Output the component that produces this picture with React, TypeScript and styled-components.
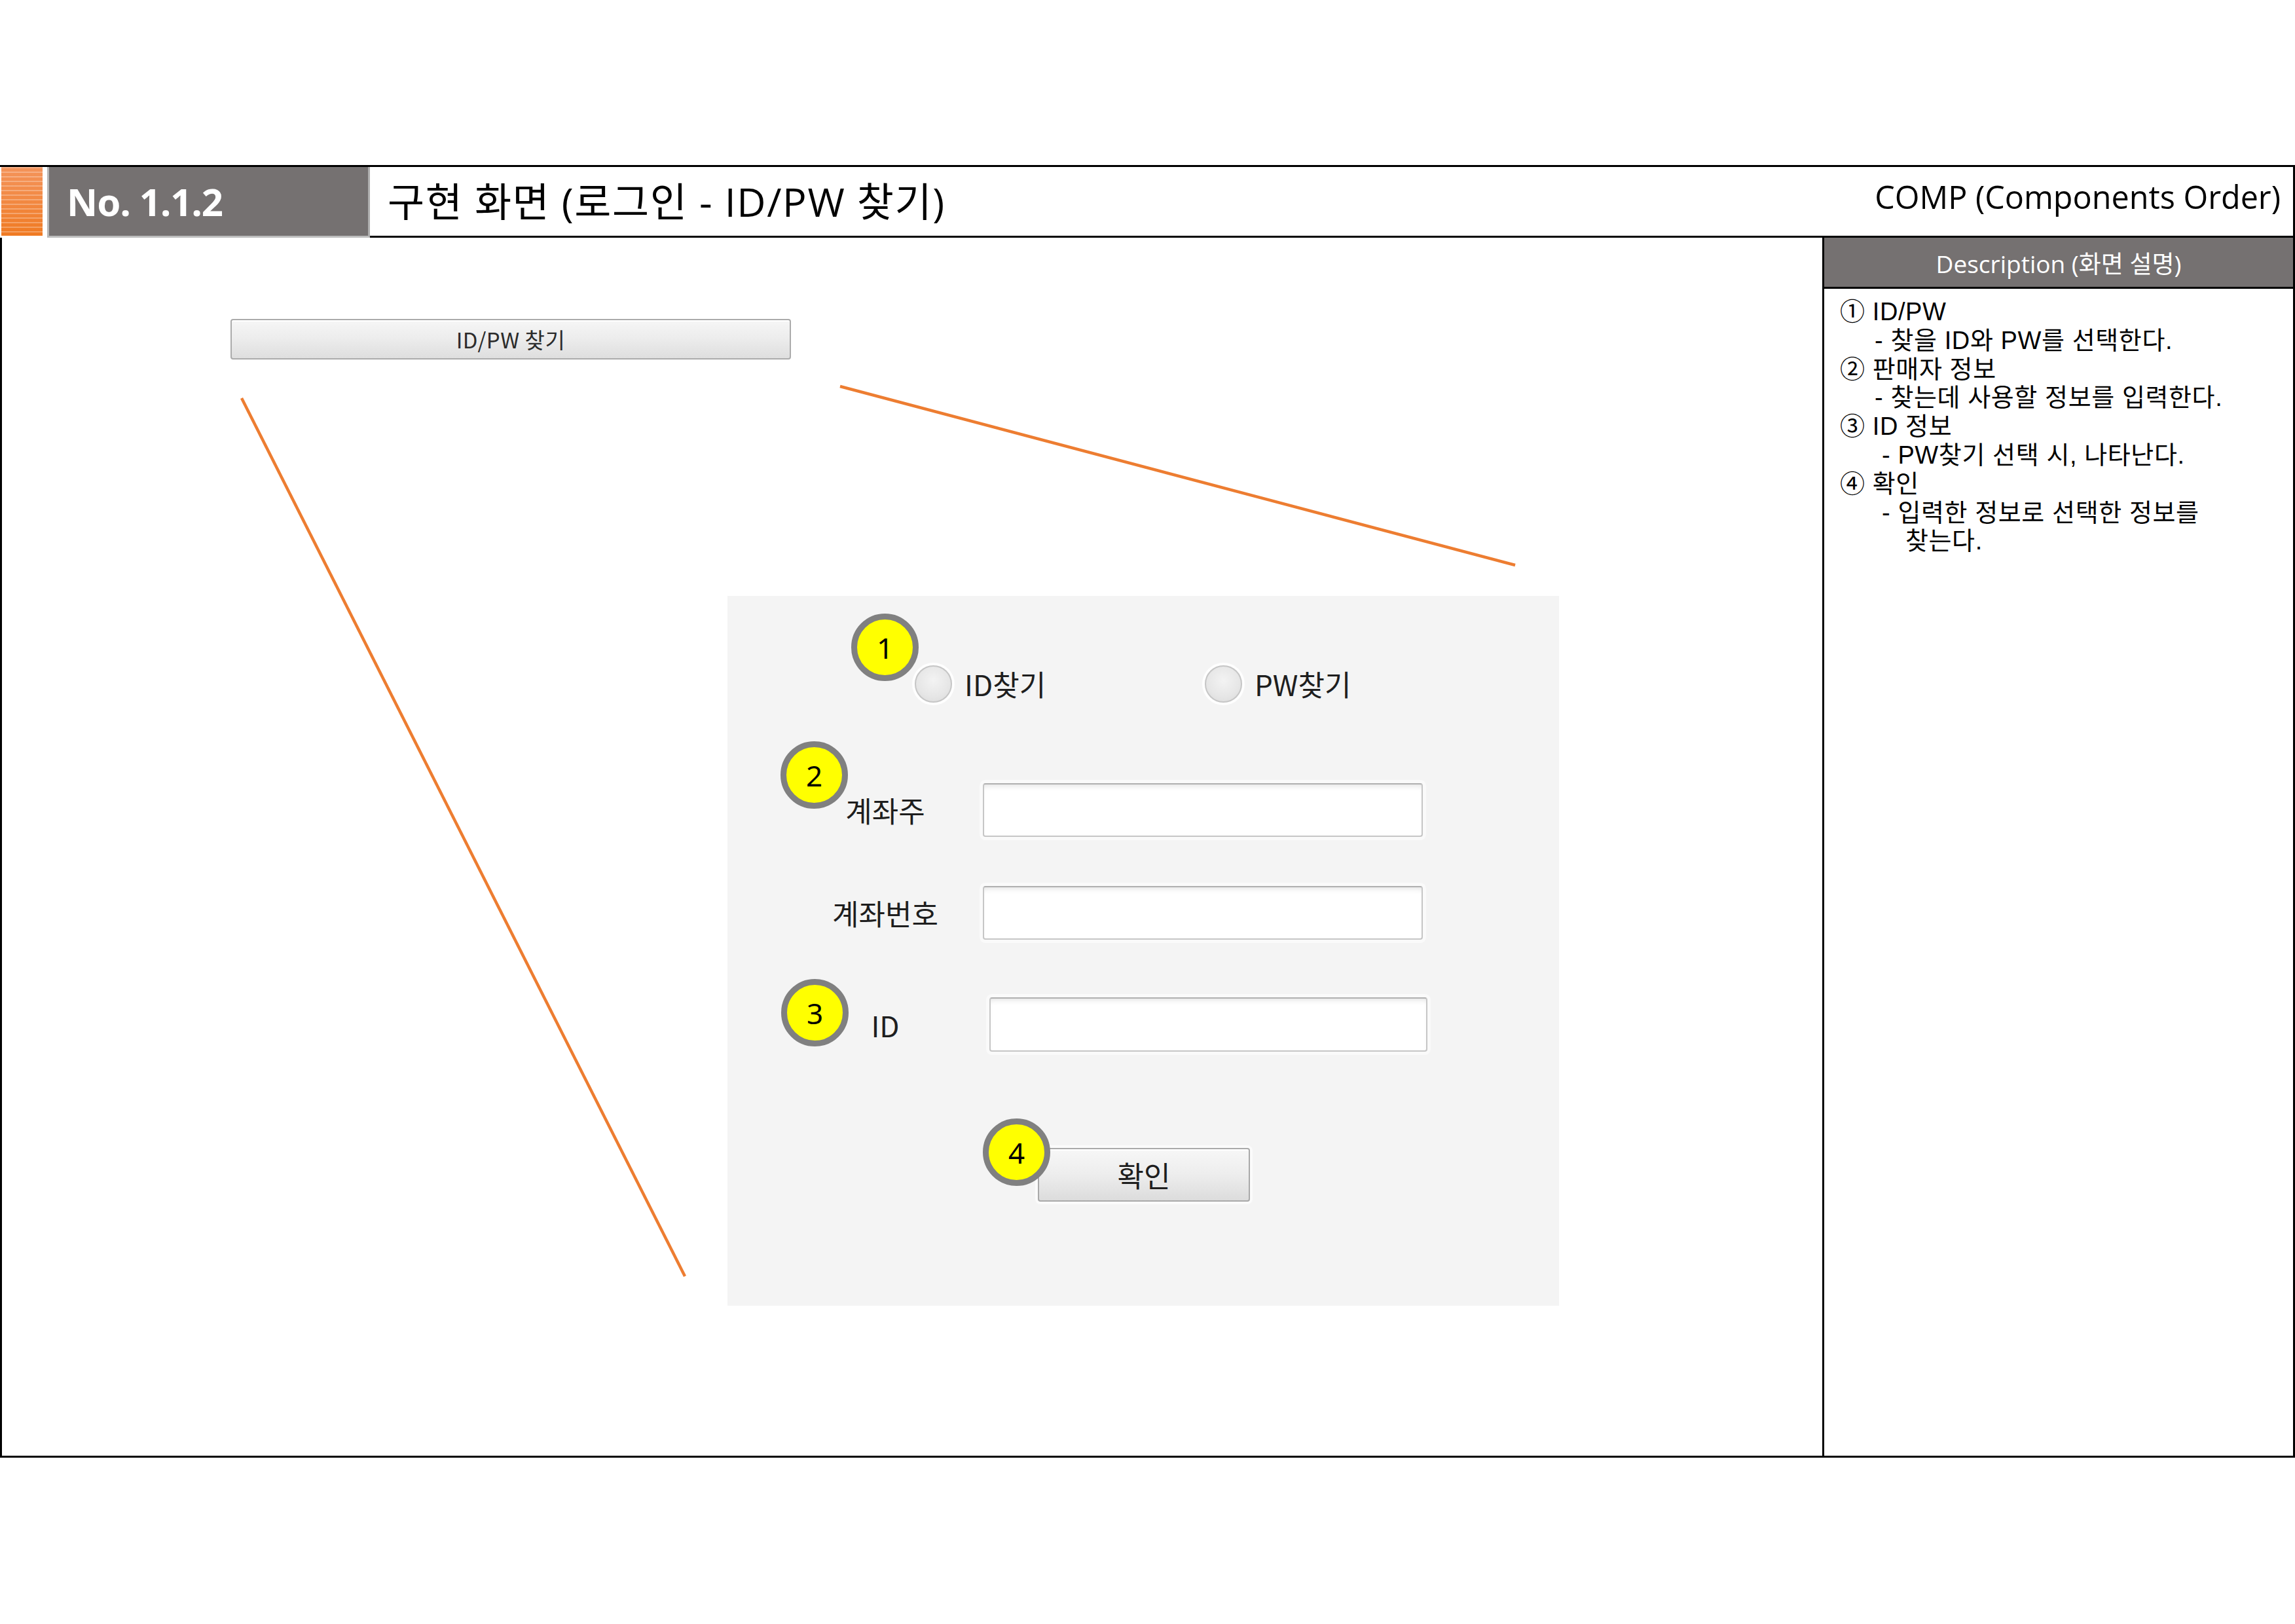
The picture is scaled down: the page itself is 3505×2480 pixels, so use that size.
import React from "react";
import styled, { createGlobalStyle } from "styled-components";

const GlobalStyle = createGlobalStyle`
  html, body {
    margin: 0;
    padding: 0;
    background: #ffffff;
  }
  body {
    width: 3505px;
    height: 2480px;
    overflow: hidden;
    font-family: "Open Sans", "Noto Sans CJK KR", sans-serif;
    color: #000;
  }
  * { box-sizing: border-box; }
`;

const KR = `"Noto Sans CJK KR", "Noto Sans", sans-serif`;
const MIX = `"Open Sans", "Noto Sans CJK KR", sans-serif`;
const COMPACT = `"Liberation Sans", "Noto Sans CJK KR", sans-serif`;

const Page = styled.div`
  width: 3505px;
  height: 2480px;
  padding-top: 252px;
  background: #fff;
`;

const Sheet = styled.div`
  width: 3505px;
  display: flex;
  flex-direction: column;
`;

const HeaderRow = styled.div`
  display: flex;
  height: 111px;
  border-top: 3px solid #000;
`;

const OrangeTab = styled.div`
  width: 63px;
  height: 105px;
  margin-left: 2px;
  background:
    repeating-linear-gradient(
      to bottom,
      rgba(255, 255, 255, 0.28) 0px,
      rgba(255, 255, 255, 0.28) 2px,
      rgba(255, 255, 255, 0) 2px,
      rgba(255, 255, 255, 0) 7px
    ),
    linear-gradient(to bottom, #f4935a 0%, #f28a45 45%, #f07a22 100%);
`;

const NumberTab = styled.div`
  width: 493px;
  height: 108px;
  margin-left: 7px;
  background: #757171;
  border-left: 3px solid #b8b8b8;
  border-right: 3px solid #adadad;
  border-bottom: 3px solid #bdbdbd;
  display: flex;
  align-items: center;
  padding-left: 27px;
  font-family: "Noto Sans", "Open Sans", sans-serif;
  font-weight: 700;
  font-size: 58px;
  color: #ffffff;
  letter-spacing: -1px;
`;

const TitleBar = styled.div`
  flex: 1;
  height: 108px;
  border-bottom: 3px solid #000;
  border-right: 3px solid #000;
  display: flex;
  align-items: center;
  justify-content: space-between;
  padding: 0 19px 0 27px;
`;

const PageTitle = styled.div`
  font-family: ${MIX};
  font-size: 61px;
  letter-spacing: 1.6px;
  color: #000;
  white-space: nowrap;
  margin-bottom: 6px;
`;

const CompLabel = styled.div`
  font-family: ${MIX};
  font-size: 48.5px;
  color: #000;
  margin-bottom: 16px;
  white-space: nowrap;
`;

const Body = styled.div`
  display: flex;
  height: 1863px;
  border-left: 3px solid #000;
  border-right: 3px solid #000;
  border-bottom: 3px solid #000;
`;

const Canvas = styled.div`
  position: relative;
  flex: 1;
  display: flex;
  flex-direction: column;
  align-items: flex-start;
`;

const Connectors = styled.svg`
  position: absolute;
  inset: 0;
  width: 100%;
  height: 100%;
  pointer-events: none;
`;

const TabBar = styled.div`
  margin: 124px 0 0 349px;
  width: 856px;
  height: 62px;
  border: 2px solid #ababab;
  border-radius: 4px;
  background: linear-gradient(to bottom, #f6f6f6 0%, #ececec 50%, #dedede 100%);
  box-shadow: inset 0 2px 0 #ffffff;
  display: flex;
  align-items: center;
  justify-content: center;
  font-family: ${KR};
  font-size: 33px;
  letter-spacing: 0.5px;
  color: #2b2b2b;
`;

const FormPanel = styled.div`
  position: relative;
  margin: 361px 0 0 1108px;
  width: 1270px;
  height: 1084px;
  background: #f4f4f4;
  display: flex;
  flex-direction: column;
`;

const Row = styled.div<{ $top: number; $height: number }>`
  position: relative;
  margin-top: ${(p) => p.$top}px;
  height: ${(p) => p.$height}px;
  display: flex;
  align-items: center;
`;

const RadioGroup = styled.div`
  display: flex;
  align-items: center;
  padding-left: 286px;
`;

const RadioOption = styled.div`
  width: 443px;
  display: flex;
  align-items: center;
  gap: 19px;
`;

const RadioDot = styled.div`
  width: 57px;
  height: 57px;
  border-radius: 50%;
  border: 2px solid #c6c6c6;
  background: radial-gradient(circle at 50% 40%, #f3f3f3 0%, #e6e6e6 60%, #d8d8d8 100%);
  box-shadow: 0 0 0 4px rgba(255, 255, 255, 0.85);
`;

const FieldText = styled.span`
  font-family: ${KR};
  font-size: 44px;
  color: #1e1e1e;
  white-space: nowrap;
`;

const FieldLabel = styled.div`
  width: 240px;
  margin-left: 121px;
  text-align: center;
  font-family: ${KR};
  font-size: 44px;
  color: #1e1e1e;
  white-space: nowrap;
`;

const TextBox = styled.div<{ $offset: number; $width: number; $height: number }>`
  margin-left: ${(p) => p.$offset}px;
  width: ${(p) => p.$width}px;
  height: ${(p) => p.$height}px;
  background: #ffffff;
  border: 2px solid #c6c6c6;
  border-top-color: #b0b0b0;
  border-radius: 4px;
  box-shadow:
    inset 0 7px 8px -5px rgba(0, 0, 0, 0.12),
    0 0 0 5px rgba(255, 255, 255, 0.55);
`;

const ConfirmButton = styled.div`
  margin-left: 474px;
  width: 324px;
  height: 82px;
  border: 2px solid #a9a9a9;
  border-radius: 4px;
  background: linear-gradient(to bottom, #f7f7f7 0%, #ededed 50%, #dcdcdc 100%);
  box-shadow: inset 0 2px 0 #ffffff, 0 0 0 4px rgba(255, 255, 255, 0.6);
  display: flex;
  align-items: center;
  justify-content: center;
  font-family: ${KR};
  font-size: 44px;
  color: #1e1e1e;
`;

const Badge = styled.div<{ $left: number; $top: number }>`
  position: absolute;
  left: ${(p) => p.$left}px;
  top: ${(p) => p.$top}px;
  width: 103px;
  height: 103px;
  border-radius: 50%;
  border: 9px solid #808080;
  background: #ffff00;
  display: flex;
  align-items: center;
  justify-content: center;
  font-family: "Noto Sans", sans-serif;
  font-size: 44px;
  color: #000;
  line-height: 1;
  z-index: 2;
`;

const DescPanel = styled.div`
  width: 719px;
  border-left: 3px solid #000;
  display: flex;
  flex-direction: column;
`;

const DescHeader = styled.div`
  height: 78px;
  background: #757171;
  border-bottom: 3px solid #000;
  display: flex;
  align-items: center;
  justify-content: center;
  font-family: ${MIX};
  font-size: 37px;
  color: #ffffff;
`;

const DescBody = styled.div`
  padding: 14px 0 0 24px;
  display: flex;
  flex-direction: column;
`;

const DescLine = styled.div<{ $indent: number }>`
  padding-left: ${(p) => p.$indent}px;
  font-family: ${COMPACT};
  font-size: 38px;
  letter-spacing: 0.6px;
  line-height: 43.8px;
  color: #000;
  white-space: nowrap;
`;

const descLines: { text: string; indent: number }[] = [
  { text: "① ID/PW", indent: 0 },
  { text: "- 찾을 ID와 PW를 선택한다.", indent: 53 },
  { text: "② 판매자 정보", indent: 0 },
  { text: "- 찾는데 사용할 정보를 입력한다.", indent: 53 },
  { text: "③ ID 정보", indent: 0 },
  { text: "- PW찾기 선택 시, 나타난다.", indent: 64 },
  { text: "④ 확인", indent: 0 },
  { text: "- 입력한 정보로 선택한 정보를", indent: 64 },
  { text: "찾는다.", indent: 100 },
];

export default function App() {
  return (
    <>
      <GlobalStyle />
      <Page>
        <Sheet>
          <HeaderRow>
            <OrangeTab />
            <NumberTab>No. 1.1.2</NumberTab>
            <TitleBar>
              <PageTitle>구현 화면 (로그인 - ID/PW 찾기)</PageTitle>
              <CompLabel>COMP (Components Order)</CompLabel>
            </TitleBar>
          </HeaderRow>
          <Body>
            <Canvas>
              <Connectors>
                <line x1={366} y1={245} x2={1043} y2={1586} stroke="#ed7d31" strokeWidth={4.5} />
                <line x1={1280} y1={227} x2={2311} y2={500} stroke="#ed7d31" strokeWidth={4.5} />
              </Connectors>
              <TabBar>ID/PW 찾기</TabBar>
              <FormPanel>
                <Row $top={105} $height={58}>
                  <Badge $left={189} $top={-78}>1</Badge>
                  <RadioGroup>
                    <RadioOption>
                      <RadioDot />
                      <FieldText>ID찾기</FieldText>
                    </RadioOption>
                    <RadioOption>
                      <RadioDot />
                      <FieldText>PW찾기</FieldText>
                    </RadioOption>
                  </RadioGroup>
                </Row>
                <Row $top={123} $height={82}>
                  <Badge $left={81} $top={-64}>2</Badge>
                  <FieldLabel>계좌주</FieldLabel>
                  <TextBox $offset={29} $width={672} $height={82} />
                </Row>
                <Row $top={75} $height={82}>
                  <FieldLabel>계좌번호</FieldLabel>
                  <TextBox $offset={29} $width={672} $height={82} />
                </Row>
                <Row $top={88} $height={83}>
                  <Badge $left={82} $top={-28}>3</Badge>
                  <FieldLabel>ID</FieldLabel>
                  <TextBox $offset={39} $width={669} $height={83} />
                </Row>
                <Row $top={147} $height={82}>
                  <Badge $left={390} $top={-45}>4</Badge>
                  <ConfirmButton>확인</ConfirmButton>
                </Row>
              </FormPanel>
            </Canvas>
            <DescPanel>
              <DescHeader>Description (화면 설명)</DescHeader>
              <DescBody>
                {descLines.map((l, i) => (
                  <DescLine key={i} $indent={l.indent}>
                    {l.text}
                  </DescLine>
                ))}
              </DescBody>
            </DescPanel>
          </Body>
        </Sheet>
      </Page>
    </>
  );
}
